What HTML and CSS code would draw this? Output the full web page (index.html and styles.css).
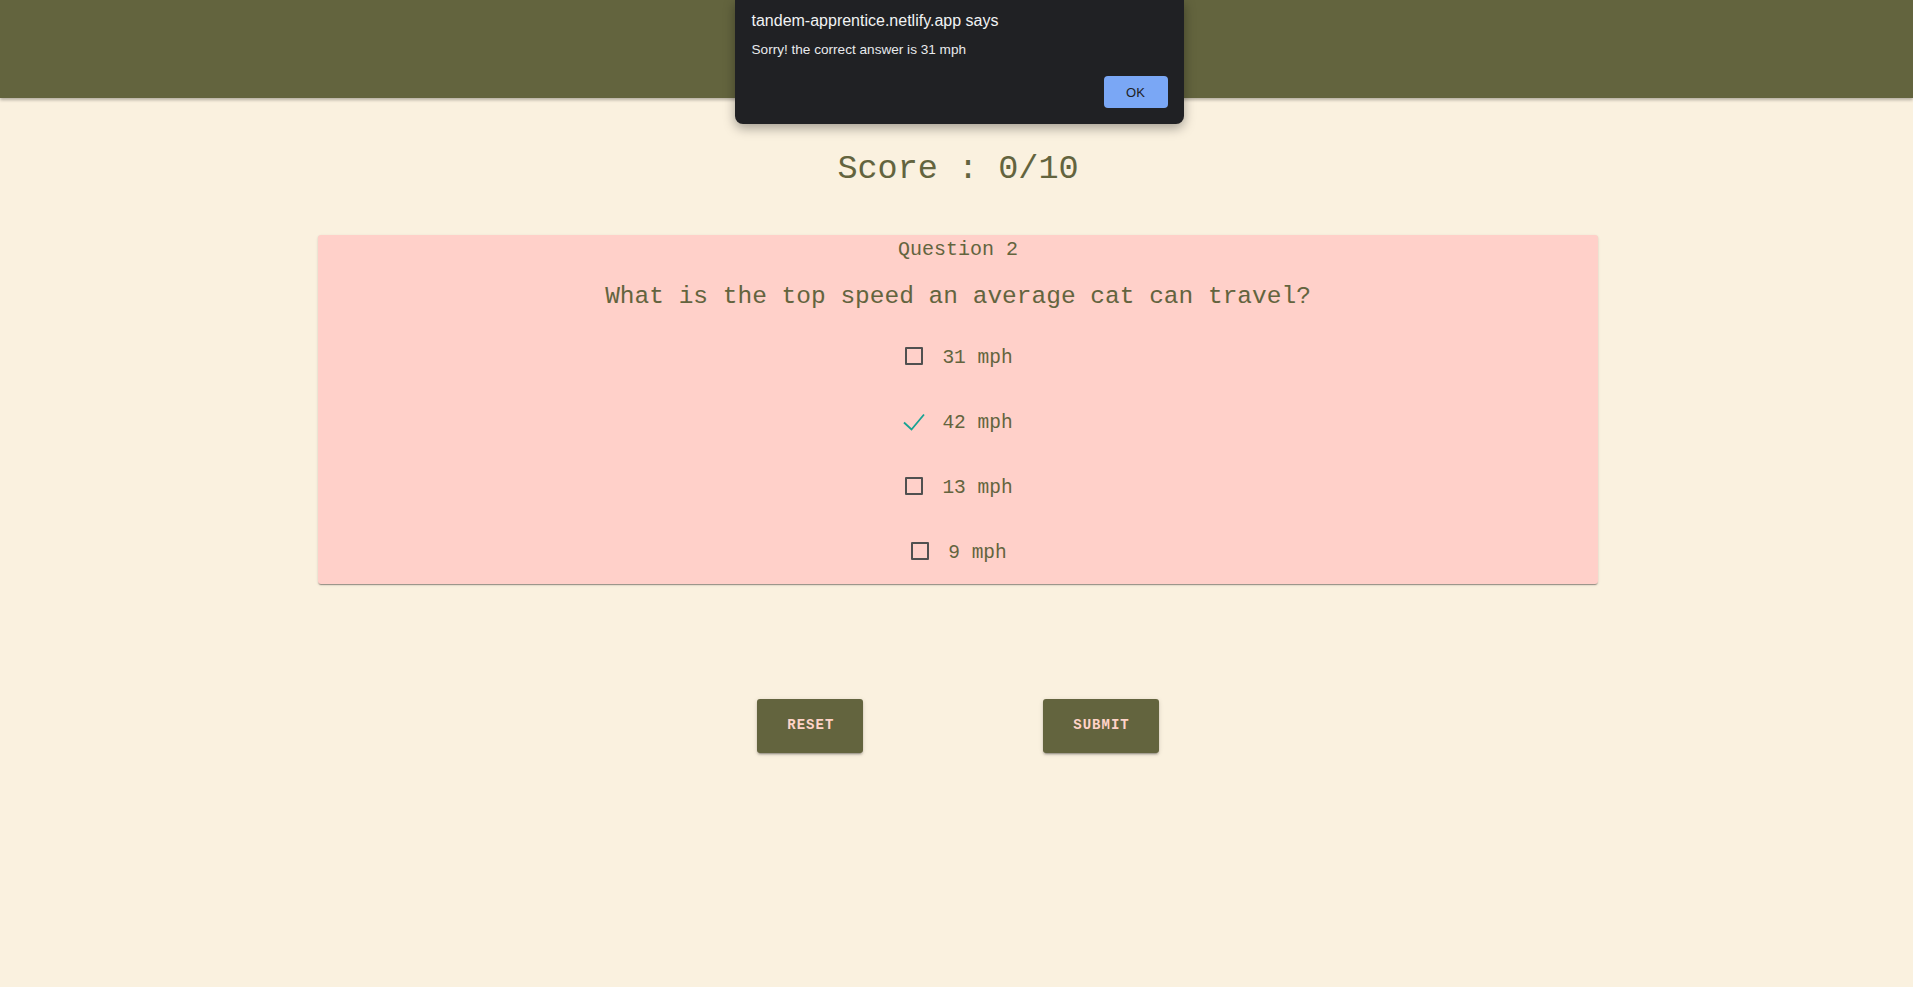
FILE: index.html
```html
<!DOCTYPE html>
<html lang="en">
<head>
<meta charset="utf-8">
<title>Quiz</title>
<link rel="stylesheet" href="styles.css">
</head>
<body>
<header class="topbar"></header>

<main class="quiz">
  <h1 class="score">Score : 0/10</h1>

  <section class="card">
    <div class="q-label">Question 2</div>
    <h2 class="q-text">What is the top speed an average cat can travel?</h2>
    <ul class="options">
      <li class="option">
        <span class="icon"><span class="box"></span></span>
        <span class="opt-text">31 mph</span>
      </li>
      <li class="option">
        <span class="icon">
          <svg class="check" width="22" height="18" viewBox="0 0 22 18"><polyline points="1,9.5 8.5,16.5 21,1.5" fill="none" stroke="#17a393" stroke-width="1.8"/></svg>
        </span>
        <span class="opt-text">42 mph</span>
      </li>
      <li class="option">
        <span class="icon"><span class="box"></span></span>
        <span class="opt-text">13 mph</span>
      </li>
      <li class="option">
        <span class="icon"><span class="box"></span></span>
        <span class="opt-text">9 mph</span>
      </li>
    </ul>
  </section>

  <div class="actions">
    <button class="btn">RESET</button>
    <button class="btn">SUBMIT</button>
  </div>
</main>

<div class="alert">
  <div class="alert-title">tandem-apprentice.netlify.app says</div>
  <div class="alert-msg">Sorry! the correct answer is 31 mph</div>
  <div class="alert-actions">
    <button class="alert-ok">OK</button>
  </div>
</div>
</body>
</html>
```

FILE: styles.css
```css
* { box-sizing: border-box; }

body {
  margin: 0;
  background: #faf1df;
  font-family: "Liberation Mono", "Courier New", monospace;
  color: #63643e;
  min-height: 987px;
}

.topbar {
  height: 98px;
  background: #63643e;
  box-shadow: 0 2px 3px rgba(0, 0, 0, 0.28);
}

.quiz {
  display: flex;
  flex-direction: column;
  align-items: center;
  padding-left: 3px;
}

.score {
  margin: 51px 0 0;
  font-size: 33.5px;
  line-height: 40px;
  font-weight: normal;
  letter-spacing: 0;
}

.card {
  margin-top: 46px;
  width: 1280px;
  background: #ffd0c9;
  border-radius: 3px;
  box-shadow: 0 2px 1px -1px rgba(0,0,0,0.25), 0 1px 1px rgba(0,0,0,0.14), 0 1px 3px rgba(0,0,0,0.12);
  padding: 3px 0 19px;
  display: flex;
  flex-direction: column;
  align-items: center;
}

.q-label {
  font-size: 20px;
  line-height: 24px;
}

.q-text {
  margin: 20px 0 0;
  font-size: 24.5px;
  line-height: 30px;
  font-weight: normal;
}

.options {
  list-style: none;
  margin: 34px 0 0;
  padding: 0;
  display: flex;
  flex-direction: column;
  align-items: center;
  gap: 41px;
}

.option {
  display: flex;
  align-items: center;
  gap: 17px;
  height: 24px;
}

.icon {
  width: 22px;
  height: 22px;
  display: flex;
  align-items: center;
  justify-content: center;
  margin-top: -4px;
}

.box {
  width: 18px;
  height: 18px;
  border: 2px solid #505050;
  border-radius: 1px;
}

.check { display: block; margin-top: 2px; }

.opt-text {
  font-size: 19.5px;
  line-height: 24px;
}

.actions {
  margin-top: 115px;
  display: flex;
  gap: 180px;
}

.btn {
  height: 54px;
  padding: 0 29px 2px 30px;
  background: #63643e;
  color: #ffd3c8;
  border: none;
  border-radius: 3px;
  font-family: "Liberation Mono", "Courier New", monospace;
  font-size: 14px;
  font-weight: bold;
  letter-spacing: 1px;
  box-shadow: 0 3px 1px -2px rgba(0,0,0,0.2), 0 2px 2px rgba(0,0,0,0.14), 0 1px 5px rgba(0,0,0,0.12);
}

.alert {
  position: absolute;
  top: 0;
  left: 50%;
  margin-left: -222px;
  width: 449px;
  height: 124px;
  background: #202124;
  border-radius: 0 0 8px 8px;
  box-shadow: 0 4px 12px rgba(0,0,0,0.35);
  padding: 10px 16px 16px 17px;
  font-family: "Liberation Sans", Arial, sans-serif;
  color: #e8eaed;
  display: flex;
  flex-direction: column;
}

.alert-title {
  font-size: 16px;
  line-height: 21px;
  color: #f1f3f4;
}

.alert-msg {
  margin-top: 9px;
  font-size: 13.6px;
  line-height: 19px;
}

.alert-actions {
  margin-top: auto;
  display: flex;
  justify-content: flex-end;
}

.alert-ok {
  width: 64px;
  height: 32px;
  border: none;
  border-radius: 4px;
  background: #7aa7f5;
  color: #202124;
  font-family: "Liberation Sans", Arial, sans-serif;
  font-size: 13px;
}
```
